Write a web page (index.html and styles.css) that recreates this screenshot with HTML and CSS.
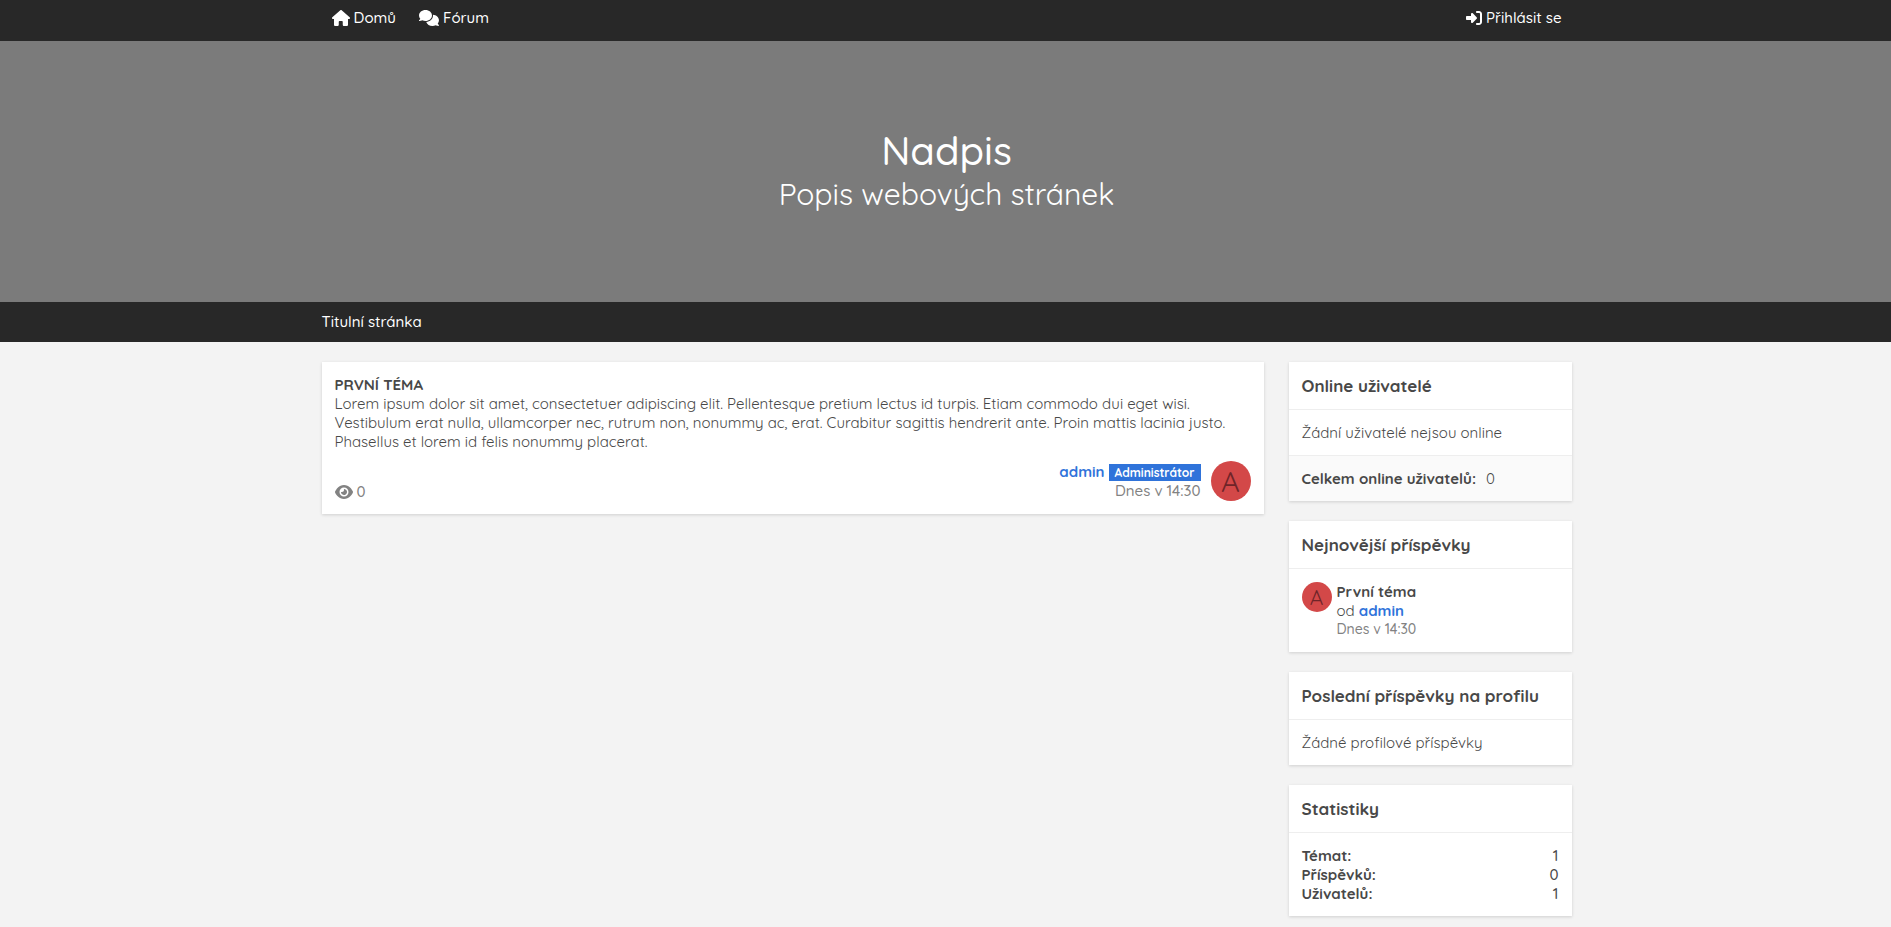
FILE: index.html
```html
<!DOCTYPE html>
<html lang="cs">
<head>
<meta charset="utf-8">
<meta name="viewport" content="width=device-width, initial-scale=1">
<title>Titulní stránka</title>
<link rel="stylesheet" href="styles.css">
</head>
<body>
<nav class="topbar">
  <div class="wrap topbar-inner">
    <div class="nav-group">
      <a class="nav-link" href="#"><svg class="icon" width="18" height="16" viewBox="0 0 576 512" aria-hidden="true"><path d="M575.8 255.5c0 18-15 32.100-32 32.100h-32l.7 160.200c0 2.700-.2 5.400-.5 8.100V472c0 22.100-17.900 40-40 40h-88c-22.100 0-40-17.900-40-40V384c0-17.700-14.300-32-32-32h-64c-17.700 0-32 14.300-32 32v88c0 22.100-17.900 40-40 40h-72c-22.100 0-40-17.900-40-40V287.600H32c-18 0-32-14-32-32.100c0-9 3-17 10-24L266.400 8c7-7 15-8 22-8s15 2 21 7L564.800 231.500c8 7 12 15 11 24z"/></svg>Domů</a>
      <a class="nav-link" href="#"><svg class="icon" width="20" height="16" viewBox="0 0 640 512" aria-hidden="true"><path d="M208 352c114.900 0 208-78.800 208-176S322.900 0 208 0S0 78.800 0 176c0 38.600 14.700 74.300 39.600 103.400c-3.500 9.400-8.700 17.700-14.200 24.700c-4.800 6.200-9.700 11-13.300 14.300c-1.800 1.600-3.300 2.900-4.300 3.700C1.100 327.200-1.600 336.400.800 344.600S11.400 358 20 352c21.900 0 43.800-5.600 62.100-12.500c9.200-3.500 17.800-7.400 25.300-11.400C137.500 343.300 171.600 352 208 352zM448 176c0 112.300-99.100 196.900-216.500 207C255.800 457.400 336.400 512 432 512c36.400 0 70.500-8.700 100.600-23.900c7.500 4 16 7.900 25.200 11.400c18.300 6.900 40.300 12.500 62.200 12.500c8.600 0 15.800-5.200 18.800-13.400s-.6-17.400-7.600-22.600c-4-3-9.700-8.500-17.400-18c-5.500-7-10.700-15.400-14.200-24.700c24.900-29 39.600-64.700 39.600-103.400c0-92.800-84.900-168.900-192.600-175.500c.4 5.100.6 10.300.6 15.500z"/></svg>Fórum</a>
    </div>
    <a class="nav-link" href="#"><svg class="icon" width="16" height="16" viewBox="0 0 512 512" aria-hidden="true"><path d="M217.900 105.900L340.700 228.700c7.200 7.200 11.300 17.100 11.300 27.300s-4.100 20.100-11.300 27.300L217.900 406.100c-6.400 6.400-15 9.900-24 9.900c-18.700 0-33.900-15.200-33.900-33.900V320H32c-17.700 0-32-14.300-32-32v-64c0-17.700 14.300-32 32-32h128v-62.100c0-18.700 15.200-33.900 33.900-33.900c9 0 17.600 3.600 24 9.900zM352 416h64c17.700 0 32-14.300 32-32V128c0-17.700-14.300-32-32-32h-64c-17.700 0-32-14.300-32-32s14.300-32 32-32h64c53 0 96 43 96 96v256c0 53-43 96-96 96h-64c-17.700 0-32-14.300-32-32s14.300-32 32-32z"/></svg>Přihlásit se</a>
  </div>
</nav>

<header class="hero">
  <h1 class="hero-title">Nadpis</h1>
  <p class="hero-subtitle">Popis webových stránek</p>
</header>

<div class="crumbs">
  <div class="wrap crumbs-inner">Titulní stránka</div>
</div>

<div class="wrap layout">
  <main>
    <article class="card topic">
      <h2 class="topic-title"><a href="#">PRVNÍ TÉMA</a></h2>
      <p>Lorem ipsum dolor sit amet, consectetuer adipiscing elit. Pellentesque pretium lectus id turpis. Etiam commodo dui eget wisi. Vestibulum erat nulla, ullamcorper nec, rutrum non, nonummy ac, erat. Curabitur sagittis hendrerit ante. Proin mattis lacinia justo. Phasellus et lorem id felis nonummy placerat.</p>
      <footer class="topic-footer">
        <span class="views"><svg class="icon" width="18" height="16" viewBox="0 0 576 512" aria-hidden="true"><path fill-rule="evenodd" d="M288 32c-80.800 0-145.500 36.800-192.600 80.600C48.600 156 17.300 208 2.500 243.700c-3.300 7.900-3.300 16.700 0 24.600C17.300 304 48.600 356 95.400 399.400C142.500 443.200 207.200 480 288 480s145.500-36.800 192.600-80.600c46.800-43.500 78.100-95.400 93-131.100c3.300-7.900 3.300-16.700 0-24.600c-14.900-35.700-46.200-87.700-93-131.100C433.500 68.800 368.800 32 288 32zM144 256a144 144 0 1 1 288 0a144 144 0 1 1-288 0zm144-64c0 35.300-28.700 64-64 64c-7.100 0-13.900-1.200-20.300-3.300c-5.500-1.800-11.900 1.600-11.700 7.400c.3 6.900 1.300 13.800 3.200 20.700c13.700 51.200 66.400 81.600 117.600 67.900s81.600-66.400 67.900-117.600c-11.100-41.500-47.800-69.400-88.600-71.100c-5.800-.2-9.200 6.100-7.400 11.700c2.100 6.400 3.300 13.200 3.300 20.300z"/></svg>0</span>
        <div class="author">
          <div class="author-info">
            <div><a class="user" href="#">admin</a> <span class="badge">Administrátor</span></div>
            <time class="muted">Dnes v 14:30</time>
          </div>
          <span class="avatar avatar-large">A</span>
        </div>
      </footer>
    </article>
  </main>

  <aside class="sidebar">
    <section class="card">
      <h3 class="card-title">Online uživatelé</h3>
      <div class="card-body">Žádní uživatelé nejsou online</div>
      <div class="card-footer"><strong>Celkem online uživatelů:</strong><span>0</span></div>
    </section>
    <section class="card">
      <h3 class="card-title">Nejnovější příspěvky</h3>
      <div class="card-body latest">
        <span class="avatar avatar-small">A</span>
        <div>
          <div><a class="post" href="#">První téma</a></div>
          <div>od <a class="user" href="#">admin</a></div>
          <time class="muted latest-time">Dnes v 14:30</time>
        </div>
      </div>
    </section>
    <section class="card">
      <h3 class="card-title">Poslední příspěvky na profilu</h3>
      <div class="card-body">Žádné profilové příspěvky</div>
    </section>
    <section class="card">
      <h3 class="card-title">Statistiky</h3>
      <dl class="card-body stats">
        <dt>Témat:</dt><dd>1</dd>
        <dt>Příspěvků:</dt><dd>0</dd>
        <dt>Uživatelů:</dt><dd>1</dd>
      </dl>
    </section>
  </aside>
</div>
</body>
</html>
```
FILE: styles.css
```css
* { box-sizing: border-box; }

body {
  margin: 0;
  background: #f3f3f3;
  color: #484848;
  font: 400 15px/19px Quicksand, Inter, "Open Sans", sans-serif;
}

h1, h2, h3, p, dl, dd { margin: 0; }
a { color: inherit; text-decoration: none; }

.wrap {
  max-width: 1252px;
  margin: 0 auto;
  padding-left: 2px;
}

.icon {
  flex: none;
  fill: currentColor;
}

.topbar,
.crumbs {
  background: #282828;
  color: #fff;
  font-weight: 500;
}

.topbar-inner {
  display: flex;
  justify-content: space-between;
  padding: 8px 10px 14px 12px;
}

.nav-group {
  display: flex;
  gap: 23px;
}

.nav-link {
  display: flex;
  align-items: center;
  gap: 4px;
}

.hero {
  display: flex;
  flex-direction: column;
  align-items: center;
  padding: 84px 16px 89px 18px;
  background: #7b7b7b;
  color: #fff;
}

.hero-title {
  font-size: 40px;
  font-weight: 500;
  line-height: 50px;
}

.hero-subtitle {
  font-size: 30px;
  line-height: 38px;
}

.crumbs-inner {
  padding-top: 10px;
  padding-bottom: 11px;
}

.layout {
  display: grid;
  grid-template-columns: minmax(0, 1fr) 283px;
  gap: 25px;
  align-items: start;
  padding-top: 20px;
  padding-bottom: 10px;
}

.card {
  background: #fff;
  box-shadow: 0 1px 3px rgba(0, 0, 0, 0.15);
}

.topic { padding: 13px; }

.topic-title {
  font-size: 15px;
  font-weight: 700;
  line-height: 19px;
}

.topic-footer {
  display: flex;
  justify-content: space-between;
  align-items: flex-end;
  margin-top: 10px;
}

.views {
  display: flex;
  align-items: center;
  gap: 4px;
  color: #828282;
  font-weight: 500;
}

.author {
  display: flex;
  align-items: center;
  gap: 10px;
  text-align: right;
}

.user {
  color: #2f73da;
  font-weight: 700;
}

.badge {
  display: inline-block;
  padding: 0 6px;
  background: #2f73da;
  color: #fff;
  font-size: 12px;
  font-weight: 700;
  line-height: 17px;
}

.muted {
  color: #828282;
  font-weight: 500;
}

.avatar {
  flex: none;
  display: flex;
  align-items: center;
  justify-content: center;
  border-radius: 50%;
  background: #d34848;
  color: #6f2428;
}

.avatar-large {
  width: 40px;
  height: 40px;
  font-size: 29px;
}

.avatar-small {
  width: 30px;
  height: 30px;
  font-size: 21px;
}

.sidebar {
  display: grid;
  gap: 20px;
}

.card-title {
  padding: 13px;
  border-bottom: 1px solid #eee;
  font-size: 17px;
  font-weight: 700;
  line-height: 21px;
}

.card-body,
.card-footer { padding: 13px; }

.card-footer {
  display: flex;
  gap: 10px;
  border-top: 1px solid #eee;
  background: #fafafa;
}

.card-footer strong,
.post,
.stats dt { font-weight: 700; }

.latest {
  display: flex;
  gap: 5px;
}

.latest-time {
  display: block;
  font-size: 14px;
}

.stats {
  display: grid;
  grid-template-columns: 1fr auto;
  text-align: right;
}

.stats dt { text-align: left; }
.stats dd { font-weight: 500; }
```
